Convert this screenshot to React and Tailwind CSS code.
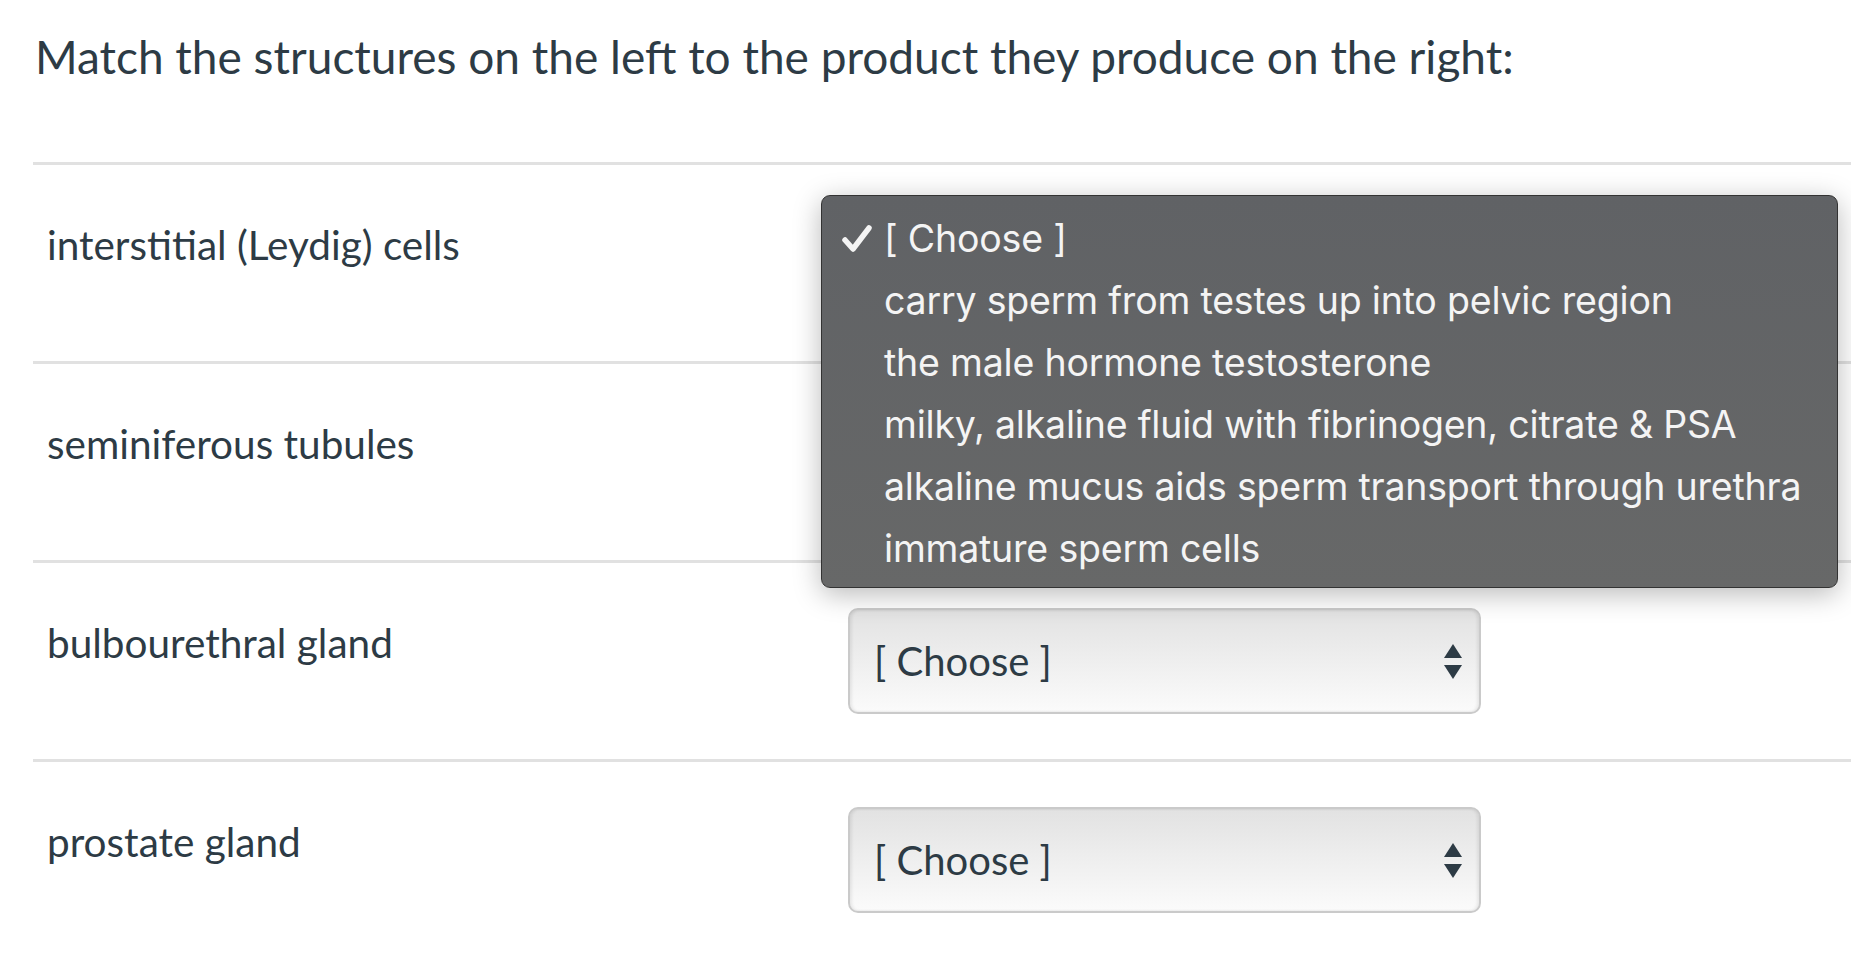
import React from "react";

const rows = [
  "interstitial (Leydig) cells",
  "seminiferous tubules",
  "bulbourethral gland",
  "prostate gland",
];

const options = [
  "carry sperm from testes up into pelvic region",
  "the male hormone testosterone",
  "milky, alkaline fluid with fibrinogen, citrate & PSA",
  "alkaline mucus aids sperm transport through urethra",
  "immature sperm cells",
];

function Arrows() {
  return (
    <svg width="18" height="35" viewBox="0 0 18 35" className="shrink-0">
      <polygon points="9,0 18,14 0,14" fill="#2d3b45" />
      <polygon points="0,21 18,21 9,35" fill="#2d3b45" />
    </svg>
  );
}

function Select({ covered }) {
  return (
    <div className="mt-[45px] flex h-[106px] w-[633px] items-center justify-between rounded-[10px] border-2 border-[#cacaca] bg-gradient-to-b from-[#e2e2e2] to-[#fbfbfb] pl-[24px] pr-[17px] shadow-[inset_2px_0_3px_rgba(0,0,0,0.07),inset_-2px_0_3px_rgba(0,0,0,0.07)]">
      {covered ? <span /> : <span className="text-[40px] leading-none text-[#2d3b45]">[ Choose ]</span>}
      <Arrows />
    </div>
  );
}

function Popup() {
  return (
    <div className="absolute left-[788px] top-[33px] z-10 h-[393px] w-[1017px] rounded-[9px] border border-[#333] bg-gradient-to-b from-[#606265] to-[#676868] pt-[12px] shadow-[0_6px_28px_rgba(0,0,0,0.28)]" style={{ fontFamily: "Inter, 'Liberation Sans', sans-serif" }}>
      <div className="flex h-[62px] items-center">
        <svg width="30" height="28" viewBox="0 0 30 28" className="ml-[20px] mr-[12px]">
          <path d="M3 15 L11 24 L27 3" fill="none" stroke="#f4f4f4" strokeWidth="5.5" strokeLinecap="round" strokeLinejoin="round" />
        </svg>
        <span className="text-[37.5px] leading-none tracking-[-0.2px] text-[#f4f4f4]">[ Choose ]</span>
      </div>
      {options.map((o) => (
        <div key={o} className="flex h-[62px] items-center pl-[62px]">
          <span className="text-[37.5px] leading-none tracking-[-0.2px] text-[#f4f4f4]">{o}</span>
        </div>
      ))}
    </div>
  );
}

export default function App() {
  return (
    <div className="min-h-[974px] w-[1851px] overflow-hidden bg-white pl-[33px] text-[#2d3b45]" style={{ fontFamily: "Lato, 'Open Sans', sans-serif" }}>
      <div className="flex h-[162px] items-start pt-[27px]">
        <h1 className="pl-[2px] text-[46px] font-normal leading-[60px]">
          Match the structures on the left to the product they produce on the right:
        </h1>
      </div>
      <div className="relative">
        {rows.map((r, i) => (
          <div key={r} className="flex h-[199px] items-start border-t-[3px] border-[#e1e1e1]">
            <div className="w-[815px] shrink-0 pl-[14px] pt-[50px] text-[40.5px] leading-[60px]">{r}</div>
            <Select covered={i < 2} />
          </div>
        ))}
        <Popup />
      </div>
    </div>
  );
}
